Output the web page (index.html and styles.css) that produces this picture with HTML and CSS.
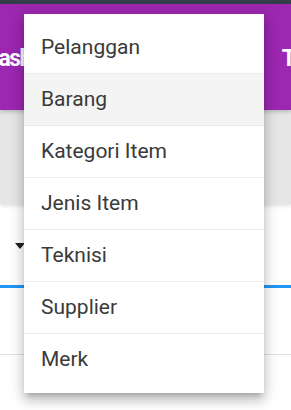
FILE: index.html
```html
<!DOCTYPE html>
<html lang="id">
<head>
  <meta charset="UTF-8" />
  <meta name="viewport" content="width=device-width, initial-scale=1.0"/>
  <title>Master Data</title>
  <link rel="stylesheet" href="styles.css">
</head>
<body>
  <div class="status-bar"></div>

  <header class="app-header">
    <div class="tab first">Dashboard</div>
    <div class="tab">Transaksi</div>
  </header>

  <div class="toolbar"></div>

  <div class="content">
    <div class="select-field">
      <span class="caret"></span>
    </div>
    <div class="list-row"></div>
  </div>

  <!-- Menu master -->
  <ul class="dropdown-menu">
    <li>Pelanggan</li>
    <li class="active">Barang</li>
    <li>Kategori Item</li>
    <li>Jenis Item</li>
    <li>Teknisi</li>
    <li>Supplier</li>
    <li>Merk</li>
  </ul>
</body>
</html>
```

FILE: styles.css
```css
body {
  margin: 0;
  font-family: Roboto, 'Liberation Sans', sans-serif;
  background-color: #fff;
  color: #333;
  overflow: hidden;
}
.status-bar {
  height: 4px;
  background-color: #333f4a;
}
.app-header {
  height: 106px;
  background-color: #9c27b0;
  display: flex;
  align-items: center;
  gap: 199px;
  overflow: hidden;
  position: relative;
  z-index: 2;
  box-shadow: 0 2px 4px rgba(0,0,0,0.2);
}
.tab {
  flex-shrink: 0;
  color: #fff;
  font-size: 23px;
  font-weight: bold;
  letter-spacing: -1.5px;
  padding-top: 2px;
}
.tab.first {
  margin-left: -15px;
}
.toolbar {
  height: 94px;
  background-color: #e6e6e6;
  box-shadow: 0 2px 4px rgba(0,0,0,0.12);
  position: relative;
  z-index: 1;
}
.select-field {
  height: 81px;
  border-bottom: 3px solid #2196f3;
  display: flex;
  align-items: center;
  padding-left: 15px;
}
.caret {
  width: 0;
  height: 0;
  border-left: 5px solid transparent;
  border-right: 5px solid transparent;
  border-top: 6px solid #222;
  margin-top: 2px;
}
.list-row {
  height: 66px;
  border-bottom: 1px solid #e0e0e0;
}

/* Menu master */
.dropdown-menu {
  position: absolute;
  top: 14px;
  left: 24px;
  width: 240px;
  margin: 0;
  padding: 8px 0;
  list-style: none;
  background: #fff;
  z-index: 10;
  box-shadow: 0 8px 10px 1px rgba(0,0,0,0.14), 0 3px 14px 2px rgba(0,0,0,0.12), 0 5px 5px -3px rgba(0,0,0,0.2);
}
.dropdown-menu li {
  height: 51px;
  line-height: 51px;
  padding-left: 17px;
  font-size: 21px;
  color: #3a3a3a;
  border-bottom: 1px solid #ebebeb;
}
.dropdown-menu li:last-child {
  border-bottom: none;
}
.dropdown-menu li.active {
  background-color: #f4f4f4;
}
```
